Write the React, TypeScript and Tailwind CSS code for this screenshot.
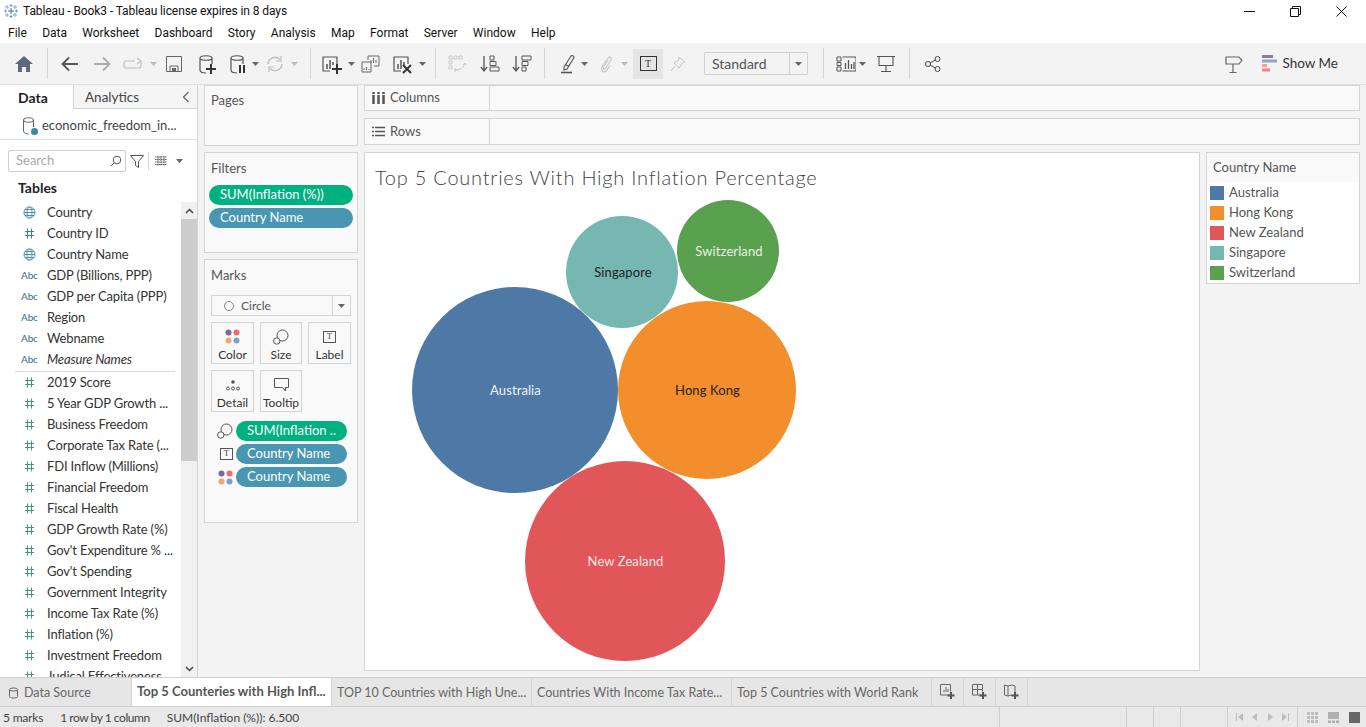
import React from "react";

const FONT = { fontFamily: "Lato, 'Open Sans', sans-serif" };
const UI_FONT = { fontFamily: "Roboto, 'Open Sans', sans-serif" };

const Ico = ({ w = 20, h = 20, children, className = "" }: { w?: number; h?: number; children: React.ReactNode; className?: string }) => (
  <svg width={w} height={h} viewBox={`0 0 ${w} ${h}`} fill="none" className={`shrink-0 ${className}`}>
    {children}
  </svg>
);

const Caret = ({ c = "#666" }: { c?: string }) => (
  <svg width="7" height="4" viewBox="0 0 7 4" className="shrink-0">
    <path d="M0 0h7L3.5 4z" fill={c} />
  </svg>
);

const Sep = () => <div className="w-px h-[31px] bg-[#d6d6d6] shrink-0" />;

// cylinder used by the data source icons
const Cyl = ({ c = "#555" }: { c?: string }) => (
  <path d="M2 4c0-3 12-3 12 0v6M2 4c0 3 12 3 12 0M2 4v12c0 2 3 3 6 3" stroke={c} strokeWidth="1.200" />
);

const BarsBox = ({ c = "#555" }: { c?: string }) => (
  <>
    <path d="M9 17H2V3h14v7" stroke={c} strokeWidth="1.200" />
    <path d="M6 10v5M9 6v9M12 8v3" stroke={c} strokeWidth="1.500" />
  </>
);

const Plus = ({ x, y, c = "#333" }: { x: number; y: number; c?: string }) => (
  <path d={`M${x} ${y - 5}v10M${x - 5} ${y}h10`} stroke={c} strokeWidth="2" />
);

const Toolbar = () => (
  <div className="h-[42px] bg-[#f3f3f3] flex items-center border-b border-[#dedede] shrink-0">
    <div className="w-[47px] flex justify-center">
      <Ico w={18} h={16}><path d="M9 0 0 8h3v8h4v-5h4v5h4V8h3z" fill="#5b6b7c" /></Ico>
    </div>
    <Sep />
    <div className="ml-[13px] flex items-center">
      <Ico w={18} h={16}><path d="M17 8H2M8 1.500 1.500 8 8 14.500" stroke="#555" strokeWidth="1.800" /></Ico>
      <Ico w={18} h={16} className="ml-[14px]"><path d="M1 8h15M10 1.500 16.500 8 10 14.500" stroke="#aaa" strokeWidth="1.800" /></Ico>
      <Ico w={20} h={14} className="ml-[12px]"><path d="M12 4H3C2 4 1 5 1 6.500v2C1 10 2 11 3 11h13c1 0 2-1 2-2.500V4M14 1l4 3-4 3" stroke="#c0c0c0" strokeWidth="1.200" /></Ico>
      <div className="ml-[7px]"><Caret c="#bbb" /></div>
      <Ico w={16} h={16} className="ml-[9px]"><path d="M.5.500h15v15H.500zM4 15v-5h8v5" stroke="#666" /><path d="M6 12h4v3H6z" fill="#666" /></Ico>
      <Ico w={20} h={20} className="ml-[16px]"><Cyl /><Plus x={13} y={15} /></Ico>
      <Ico w={20} h={20} className="ml-[11px]"><Cyl /><path d="M11 11v8M15 11v8" stroke="#333" strokeWidth="2" /></Ico>
      <div className="ml-[3px]"><Caret /></div>
      <Ico w={18} h={18} className="ml-[7px]"><path d="M2 9a7 7 0 0 1 12-4.500M16 9a7 7 0 0 1-12 4.500" stroke="#c0c0c0" strokeWidth="1.500" /><path d="M15 1v5h-5M3 17v-5h5" stroke="#c0c0c0" strokeWidth="1.200" /></Ico>
      <div className="ml-[7px]"><Caret c="#bbb" /></div>
    </div>
    <div className="ml-[12px]"><Sep /></div>
    <Ico w={22} h={20} className="ml-[10px]"><BarsBox /><Plus x={16} y={15} /></Ico>
    <div className="ml-[5px]"><Caret /></div>
    <Ico w={20} h={18} className="ml-[6px]">
      <path d="M7 5V1h11v10h-5M1 7h9v10H1z" stroke="#666" />
      <path d="M10 8V5M12.500 8V3M15 8V5M3 15v-2M5.500 15v-3M8 15v-1" stroke="#666" />
    </Ico>
    <Ico w={22} h={20} className="ml-[11px]"><BarsBox /><path d="M11 11l8 8M19 11l-8 8" stroke="#333" strokeWidth="2" /></Ico>
    <div className="ml-[5px]"><Caret /></div>
    <div className="ml-[9px]"><Sep /></div>
    <Ico w={20} h={20} className="ml-[12px]">
      <path d="M1 2h3v3H1zM6 2h3v3H6zM11 2h3v3h-3zM1 7h3v3H1zM1 12h3v3H1z" stroke="#c8c8c8" />
      <path d="M7 16c5 0 9-2 10-7M15 11l2-2 2 2M7 14v4M7 16h3" stroke="#c8c8c8" />
    </Ico>
    <Ico w={20} h={18} className="ml-[12px]">
      <path d="M4 1v14M1 12l3 4 3-4" stroke="#555" strokeWidth="1.300" />
      <path d="M10 1h4v4h-4zM10 6.500h6v4h-6zM10 12h9v4h-9z" stroke="#555" />
    </Ico>
    <Ico w={20} h={18} className="ml-[12px]">
      <path d="M4 1v14M1 12l3 4 3-4" stroke="#555" strokeWidth="1.300" />
      <path d="M10 1h9v4h-9zM10 6.500h6v4h-6zM10 12h4v4h-4z" stroke="#555" />
    </Ico>
    <div className="ml-[12px]"><Sep /></div>
    <Ico w={16} h={20} className="ml-[15px]">
      <path d="M4 13 11 2c1-1 3 0 3 1.500L7 15l-3 1zM5.500 10.500l3.500 2" stroke="#555" strokeWidth="1.100" />
      <path d="M1 18.500h11" stroke="#555" strokeWidth="1.600" />
    </Ico>
    <div className="ml-[5px]"><Caret /></div>
    <Ico w={12} h={18} className="ml-[12px]">
      <path d="M3 10 8 3c1.500-2 4 0 3 2L5.500 13.500c-1 1.500-3 .5-2.200-1L8 5.500M3 10c-3 4-1 7 1.500 7 1 0 2-1 2.500-2l3-4.500" stroke="#c4c4c4" strokeWidth="1.100" />
    </Ico>
    <div className="ml-[9px]"><Caret c="#bbb" /></div>
    <div className="ml-[5px] w-[30px] h-[30px] bg-[#e4e4e4] flex items-center justify-center">
      <div className="w-[17px] h-[15px] border border-[#333] flex items-center justify-center text-[10px] leading-none text-[#333]" style={{ fontFamily: "'Liberation Serif', serif" }}>T</div>
    </div>
    <Ico w={16} h={16} className="ml-[7px]"><path d="M9 1l6 5-3 1-2 4-1 1-5-5 1-1 4-2zM5 10l-4 5" stroke="#c4c4c4" /></Ico>
    <div className="ml-[18px] w-[104px] h-[23px] border border-[#cfcfcf] rounded-[2px] flex items-center text-[14px] text-[#555]">
      <span className="flex-1 pl-[7px]">Standard</span>
      <div className="w-[18px] h-full border-l border-[#cfcfcf] flex items-center justify-center"><Caret /></div>
    </div>
    <div className="ml-[15px]"><Sep /></div>
    <Ico w={20} h={16} className="ml-[12px]">
      <path d="M1 1h4v4H1zM1 6.500h4v3H1zM1 11h4v4H1zM6.500 1H20v14H6.500" stroke="#555" />
      <path d="M9.500 13V7M12.500 13V4M15.500 13V8M18 13V6" stroke="#555" strokeWidth="1.300" />
    </Ico>
    <div className="ml-[3px]"><Caret /></div>
    <Ico w={18} h={16} className="ml-[11px]"><path d="M0 .500h18M2 .500h14v9H2zM9 9.500v6M4 15.500h10" stroke="#555" strokeWidth="1.100" /></Ico>
    <div className="ml-[14px]"><Sep /></div>
    <Ico w={16} h={16} className="ml-[15px]">
      <circle cx="12.500" cy="3" r="2.500" stroke="#444" /><circle cx="3" cy="8" r="2.500" stroke="#444" /><circle cx="12.500" cy="13" r="2.500" stroke="#444" />
      <path d="M5 7l5.500-3M5 9l5.500 3" stroke="#444" />
    </Ico>
    <div className="flex-1" />
    <Ico w={18} h={18} className="mr-[19px]">
      <path d="M1 2h13l3 3-3 4H1zM8 9v9M4.500 17.500h7" stroke="#666" strokeWidth="1.200" />
    </Ico>
    <svg width="15" height="17" viewBox="0 0 15 17" className="shrink-0">
      <rect width="11" height="3" fill="#8b7ca0" />
      <rect y="4.500" width="15" height="3" fill="#8ba7cc" />
      <rect y="9" width="5" height="3" fill="#f4a77a" />
      <rect y="13.500" width="8" height="3" fill="#f27f85" />
    </svg>
    <span className="ml-[5px] mr-[28px] text-[13.5px] text-[#333]">Show Me</span>
  </div>
);

type Kind = "globe" | "hash" | "abc";

const FieldIcon = ({ kind, green }: { kind: Kind; green?: boolean }) => {
  if (kind === "abc")
    return <span className="text-[10px] -ml-[2px] text-[#3f7390] font-medium">Abc</span>;
  if (kind === "globe")
    return (
      <Ico w={13} h={13}>
        <circle cx="6.500" cy="6.500" r="5.500" stroke="#4f90ae" />
        <ellipse cx="6.500" cy="6.500" rx="2.500" ry="5.500" stroke="#4f90ae" />
        <path d="M1 6.500h11M2 3.500h9M2 9.500h9" stroke="#4f90ae" />
      </Ico>
    );
  const c = green ? "#3f9c7a" : "#3e7f9c";
  return (
    <Ico w={13} h={13}><path d="M4.500 1.500v10M8.500 1.500v10M2 4.500h9M2 8.500h9" stroke={c} /></Ico>
  );
};

const dims: [Kind, string, boolean?][] = [
  ["globe", "Country"],
  ["hash", "Country ID"],
  ["globe", "Country Name"],
  ["abc", "GDP (Billions, PPP)"],
  ["abc", "GDP per Capita (PPP)"],
  ["abc", "Region"],
  ["abc", "Webname"],
  ["abc", "Measure Names", true],
];

const measures = [
  "2019 Score",
  "5 Year GDP Growth ...",
  "Business Freedom",
  "Corporate Tax Rate (...",
  "FDI Inflow (Millions)",
  "Financial Freedom",
  "Fiscal Health",
  "GDP Growth Rate (%)",
  "Gov't Expenditure % ...",
  "Gov't Spending",
  "Government Integrity",
  "Income Tax Rate (%)",
  "Inflation (%)",
  "Investment Freedom",
  "Judical Effectiveness",
];

const Field = ({ icon, label, green, italic }: { icon: Kind; label: string; green?: boolean; italic?: boolean }) => (
  <div className={`h-[21px] flex items-center pl-[23px] text-[13px] tracking-[-0.15px] text-[#333] whitespace-nowrap ${italic ? "italic" : ""}`}>
    <span className="w-[24px] flex not-italic"><FieldIcon kind={icon} green={green} /></span>
    <span>{label}</span>
  </div>
);

const DataPane = () => (
  <aside className="w-[198px] shrink-0 bg-white border-r border-[#d4d4d4] flex flex-col overflow-hidden">
    <div className="h-[24px] flex shrink-0 text-[14px]">
      <div className="w-[73px] pl-[18px] font-bold text-[#222] flex items-center">Data</div>
      <div className="flex-1 flex items-center pl-[11px] pt-[1px] bg-[#f5f5f5] border-l border-b border-[#d4d4d4] text-[#444] text-[13.5px]">
        Analytics
        <svg width="8" height="12" viewBox="0 0 8 12" className="ml-auto mr-[7px]"><path d="M6.500 1 1.500 6l5 5" stroke="#666" strokeWidth="1.300" fill="none" /></svg>
      </div>
    </div>
    <div className="h-[31px] shrink-0 border-b border-[#e0e0e0] flex items-center pt-[3px] pl-[23px] text-[13px] text-[#444]">
      <span className="relative w-[14px] h-[18px]">
        <Ico w={12} h={18}><path d="M.5 3c0-3 10-3 10 0v7M.5 3c0 3 10 3 10 0M.5 3v11c0 2 3 3 5 3" stroke="#666" /></Ico>
        <span className="absolute right-[-1px] bottom-0 w-[7px] h-[7px] rounded-full bg-[#3e88a8]" />
      </span>
      <span className="ml-[5px]">economic_freedom_in...</span>
    </div>
    <div className="flex items-center h-[22px] mt-[10px] ml-[8px] shrink-0">
      <div className="w-[118px] h-[22px] border border-[#cfcfcf] rounded-[2px] flex items-center pl-[7px] text-[13px] text-[#aaa]">
        Search
        <svg width="12" height="12" viewBox="0 0 12 12" className="ml-auto mr-[3px]"><circle cx="7" cy="5" r="3.800" stroke="#555" fill="none" /><path d="M4.200 7.800 1 11" stroke="#555" /></svg>
      </div>
      <svg width="14" height="13" viewBox="0 0 14 13" className="ml-[4px]"><path d="M.5.500h13L8.500 6.500v6l-3-2v-4z" stroke="#555" fill="none" /></svg>
      <div className="w-px h-[18px] bg-[#d6d6d6] ml-[4px]" />
      <svg width="12" height="10" viewBox="0 0 12 10" className="ml-[6px]"><path d="M0 1h12M0 3.500h12M0 6h12M0 8.500h12M3 0v10M6 0v10M9 0v10" stroke="#666" strokeDasharray="1.500 .5" /></svg>
      <div className="ml-[9px]"><Caret /></div>
    </div>
    <div className="h-[30px] shrink-0 flex items-center pl-[18px] text-[14px] font-bold text-[#222]">Tables</div>
    <div className="flex-1 flex min-h-0">
      <div className="flex-1 overflow-hidden">
        {dims.map(([k, l, it]) => (
          <Field key={l} icon={k} label={l} italic={it} />
        ))}
        <div className="h-px bg-[#dcdcdc] ml-[15px] mt-[1px] w-[160px]" />
        {measures.map((l) => (
          <Field key={l} icon="hash" label={l} green />
        ))}
      </div>
      <div className="w-[16px] shrink-0 bg-[#f0f0f0] flex flex-col">
        <div className="h-[17px] flex items-center justify-center">
          <svg width="9" height="6" viewBox="0 0 9 6"><path d="M1 5 4.500 1.500 8 5" stroke="#444" strokeWidth="1.500" fill="none" /></svg>
        </div>
        <div className="h-[242px] bg-[#cdcdcd]" />
        <div className="mt-auto h-[17px] flex items-center justify-center">
          <svg width="9" height="6" viewBox="0 0 9 6"><path d="M1 1 4.500 4.500 8 1" stroke="#444" strokeWidth="1.500" fill="none" /></svg>
        </div>
      </div>
    </div>
  </aside>
);

const Pill = ({ label, green, className = "" }: { label: string; green?: boolean; className?: string }) => (
  <div className={`h-[20px] rounded-full flex items-center text-[13px] text-white whitespace-nowrap pl-[11px] ${green ? "bg-[#00b180]" : "bg-[#4996b2]"} ${className}`}>
    {label}
  </div>
);

const Card = ({ title, h, pt = "pt-[7px]", children }: { title: string; h: string; pt?: string; children?: React.ReactNode }) => (
  <div className={`${h} border border-[#d4d4d4] bg-[#f9f9f9] shrink-0`}>
    <div className={`px-[6px] ${pt} text-[13px] leading-[16px] text-[#555]`}>{title}</div>
    {children}
  </div>
);

const Dots = () => (
  <svg width="15" height="15" viewBox="0 0 15 15">
    <circle cx="3.500" cy="3.500" r="3" fill="#7b6a96" />
    <circle cx="11.500" cy="3.500" r="3" fill="#ee6a75" />
    <circle cx="3.500" cy="11.500" r="3" fill="#f2a56e" />
    <circle cx="11.500" cy="11.500" r="3" fill="#7f9fc9" />
  </svg>
);

const SizeIco = () => (
  <svg width="16" height="16" viewBox="0 0 16 16" fill="none">
    <circle cx="9.500" cy="6.500" r="5.500" stroke="#555" />
    <circle cx="3.800" cy="12" r="3.200" stroke="#555" fill="#f9f9f9" />
  </svg>
);

const TBox = () => (
  <div className="w-[13px] h-[12px] border border-[#555] flex items-center justify-center text-[8px] leading-none text-[#333]" style={{ fontFamily: "'Liberation Serif', serif" }}>T</div>
);

const MarkBtn = ({ label, children }: { label: string; children: React.ReactNode }) => (
  <div className="h-[42px] border border-[#d4d4d4] flex flex-col items-center text-[12px] text-[#333]">
    <div className="h-[24px] flex items-center justify-center pt-[3px]">{children}</div>
    <div className="leading-[16px]">{label}</div>
  </div>
);

const Cards = () => (
  <div className="w-[154px] shrink-0 ml-[6px] flex flex-col gap-[6px]">
    <Card title="Pages" h="h-[61px]" pt="pt-[6px]" />
    <Card title="Filters" h="h-[101px]">
      <div className="mt-[9px] ml-[4px] w-[144px] flex flex-col gap-[3px]">
        <Pill green label="SUM(Inflation (%))" />
        <Pill label="Country Name" />
      </div>
    </Card>
    <Card title="Marks" h="h-[264px]">
      <div className="mx-[6px] mt-[12px] h-[21px] w-[140px] border border-[#d4d4d4] flex items-center text-[12px] text-[#555]">
        <div className="flex-1 flex items-center pl-[12px]">
          <span className="w-[10px] h-[10px] rounded-full border border-[#888]" />
          <span className="ml-[7px]">Circle</span>
        </div>
        <div className="w-[18px] h-full border-l border-[#d4d4d4] flex items-center justify-center"><Caret /></div>
      </div>
      <div className="ml-[6px] mt-[6px] grid grid-cols-[43px_42px_43px] gap-[6px]">
        <MarkBtn label="Color"><Dots /></MarkBtn>
        <MarkBtn label="Size"><SizeIco /></MarkBtn>
        <MarkBtn label="Label"><TBox /></MarkBtn>
        <MarkBtn label="Detail">
          <svg width="14" height="12" viewBox="0 0 14 12" fill="none">
            <circle cx="7" cy="3" r="1.800" fill="#555" />
            <circle cx="2" cy="9.500" r="1.500" stroke="#555" /><circle cx="7" cy="9.500" r="1.500" stroke="#555" /><circle cx="12" cy="9.500" r="1.500" stroke="#555" />
          </svg>
        </MarkBtn>
        <MarkBtn label="Tooltip">
          <svg width="15" height="14" viewBox="0 0 15 14" fill="none"><path d="M.5.500h14v9h-3v3.500l-3-3.500H.5z" stroke="#555" /></svg>
        </MarkBtn>
      </div>
      <div className="mt-[9px] flex flex-col gap-[3px]">
        {[
          { ic: <SizeIco />, label: "SUM(Inflation ..", green: true },
          { ic: <TBox />, label: "Country Name", green: false },
          { ic: <Dots />, label: "Country Name", green: false },
        ].map((p, i) => (
          <div key={i} className="flex items-center h-[20px]">
            <div className="w-[31px] pr-[3px] flex justify-end">{p.ic}</div>
            <Pill label={p.label} green={p.green} className="w-[111px]" />
          </div>
        ))}
      </div>
    </Card>
  </div>
);

const Shelf = ({ label, icon, h }: { label: string; icon: React.ReactNode; h: string }) => (
  <div className={`${h} border border-[#d4d4d4] bg-[#f9f9f9] flex shrink-0`}>
    <div className="w-[125px] border-r border-[#d4d4d4] flex items-center pl-[7px] text-[13px] text-[#555]">
      <span className="w-[18px]">{icon}</span>
      {label}
    </div>
  </div>
);

const bubbles = [
  { name: "Australia", cx: 150.5, cy: 238, r: 103, bg: "bg-[#4e79a7]", text: "text-[#eef2f6]" },
  { name: "Hong Kong", cx: 342.5, cy: 238, r: 89, bg: "bg-[#f28e2b]", text: "text-[#222]" },
  { name: "New Zealand", cx: 260.5, cy: 409, r: 100, bg: "bg-[#e15759]", text: "text-[#f8e6e6]" },
  { name: "Singapore", cx: 258, cy: 120, r: 56, bg: "bg-[#76b7b2]", text: "text-[#222]" },
  { name: "Switzerland", cx: 364, cy: 99, r: 51, bg: "bg-[#59a14f]", text: "text-[#e8f2e6]" },
];

const View = () => (
  <div className="relative flex-1 h-[519px] border border-[#d4d4d4] bg-white">
    <div className="pl-[10px] pt-[11px] text-[20px] font-light leading-[26px] text-[#444] tracking-[0.76px]">
      Top 5 Countries With High Inflation Percentage
    </div>
    {bubbles.map((b) => (
      <div
        key={b.name}
        className={`absolute rounded-full flex items-center justify-center pt-[2px] pl-[2px] text-[13px] tracking-[0.1px] ${b.bg} ${b.text}`}
        style={{ left: b.cx - b.r - 1, top: b.cy - b.r - 1, width: b.r * 2, height: b.r * 2 }}
      >
        {b.name}
      </div>
    ))}
  </div>
);

const legend: [string, string][] = [
  ["bg-[#4e79a7]", "Australia"],
  ["bg-[#f28e2b]", "Hong Kong"],
  ["bg-[#e15759]", "New Zealand"],
  ["bg-[#76b7b2]", "Singapore"],
  ["bg-[#59a14f]", "Switzerland"],
];

const Legend = () => (
  <div className="w-[154px] h-[132px] ml-[6px] shrink-0 border border-[#d4d4d4] bg-white text-[13px] text-[#555]">
    <div className="h-[29px] bg-[#f9f9f9] flex items-center pl-[6px]">Country Name</div>
    <div className="pt-[1px]">
      {legend.map(([c, l]) => (
        <div key={l} className="h-[20px] flex items-center pl-[3px]">
          <span className={`w-[14px] h-[14px] ${c}`} />
          <span className="ml-[5px]">{l}</span>
        </div>
      ))}
    </div>
  </div>
);

const tabs = [
  "TOP 10 Countries with High Une...",
  "Countries With Income Tax Rate...",
  "Top 5 Countries with World Rank",
];

const TabBar = () => (
  <div className="h-[30px] shrink-0 bg-[#e6e6e6] border-t border-b border-[#cfcfcf] flex text-[12.5px] text-[#666]">
    <div className="w-[132px] flex items-center pl-[9px] pt-[2px] border-r border-[#d4d4d4]">
      <svg width="9" height="12" viewBox="0 0 9 12" fill="none"><path d="M.5 2.500c0-2 8-2 8 0v7c0 2-8 2-8 0zM.5 2.500c0 2 8 2 8 0" stroke="#666" /></svg>
      <span className="ml-[6px]">Data Source</span>
    </div>
    <div className="w-[200px] bg-white flex items-center pl-[5px] border-r border-[#d4d4d4] text-[13px] font-bold text-[#555] whitespace-nowrap">
      Top 5 Counteries with High Infl...
    </div>
    {tabs.map((t) => (
      <div key={t} className="w-[200px] flex items-center pl-[5px] pt-[2px] border-r border-[#d4d4d4] whitespace-nowrap">{t}</div>
    ))}
    {[0, 1, 2].map((i) => (
      <div key={i} className="w-[32px] flex items-center justify-center border-r border-[#d4d4d4]">
        <svg width="16" height="16" viewBox="0 0 16 16" fill="none">
          {i === 0 && <path d="M9 11H.5V.5h10v7M4 8V6M6 8V3M8 8V5" stroke="#666" />}
          {i === 1 && <path d="M9 11H.5V.5h10v7M.5 5.500h10M5.500.5V11" stroke="#666" />}
          {i === 2 && <path d="M8 11 4 12 .5 11V1L4 2l4-1 3 1v6M4 2v10" stroke="#666" />}
          <path d="M11 8v7M7.500 11.500h7" stroke="#555" strokeWidth="2" />
        </svg>
      </div>
    ))}
  </div>
);

const StatusBar = () => (
  <div className="h-[20px] shrink-0 bg-[#e9e9e9] flex items-center text-[12px] text-[#444]">
    <span className="ml-[3px] pt-[1px] tracking-[-0.2px]">5 marks</span>
    <span className="ml-[17px] pt-[1px] tracking-[-0.45px]">1 row by 1 column</span>
    <span className="ml-[17px] pt-[1px]">SUM(Inflation (%)): 6.500</span>
    <div className="flex-1" />
    <div className="w-[127px] h-full border-l border-[#cfcfcf]" />
    <div className="w-[27px] h-full border-l border-[#cfcfcf]" />
    <div className="w-[27px] h-full border-l border-[#cfcfcf]" />
    <div className="w-[47px] h-full border-l border-[#cfcfcf]" />
    <div className="w-[71px] h-full border-l border-r border-[#cfcfcf] flex items-center justify-center gap-[9px]">
      <svg width="7" height="8" viewBox="0 0 7 8"><path d="M7 0v8L2 4zM0 0h1v8H0z" fill="#bdbdbd" /></svg>
      <svg width="6" height="8" viewBox="0 0 6 8"><path d="M5 0v8L0 4z" fill="#bdbdbd" /></svg>
      <svg width="6" height="8" viewBox="0 0 6 8"><path d="M1 0v8l5-4z" fill="#bdbdbd" /></svg>
      <svg width="7" height="8" viewBox="0 0 7 8"><path d="M0 0v8l5-4zM6 0h1v8H6z" fill="#bdbdbd" /></svg>
    </div>
    <div className="flex items-center ml-[9px] mr-[6px] gap-[10px]">
      <svg width="11" height="11" viewBox="0 0 11 11" fill="#bdbdbd">
        {[0, 4, 8].flatMap((x) => [0, 4, 8].map((y) => <rect key={`${x}-${y}`} x={x} y={y} width="3" height="3" />))}
      </svg>
      <svg width="11" height="11" viewBox="0 0 11 11" fill="#b0b0b0"><path d="M0 0h11v7H0zM0 8.500h3V11H0zM4 8.500h3V11H4zM8 8.500h3V11H8z" /></svg>
      <span className="w-[11px] h-[11px] bg-[#666]" />
    </div>
  </div>
);

// small plus marks that make up the app logo
const logoCrosses: [number, number, number, string][] = [
  [8, 8, 3, "#3f6f95"],
  [8, 2.5, 1.5, "#6f9fc0"],
  [8, 13.5, 1.5, "#6f9fc0"],
  [2.5, 8, 1.5, "#6f9fc0"],
  [13.5, 8, 1.5, "#6f9fc0"],
  [4, 4, 2, "#7fb0cc"],
  [12, 4, 2, "#7fb0cc"],
  [4, 12, 2, "#7fb0cc"],
  [12, 12, 2, "#7fb0cc"],
];

const App = () => {
  return (
    <div className="w-[1366px] h-[727px] flex flex-col overflow-hidden bg-[#f3f3f3]" style={FONT}>
      <div className="h-[22px] bg-white flex items-center shrink-0 text-[12px] text-[#111]" style={UI_FONT}>
        <svg width="16" height="16" viewBox="0 0 16 16" className="ml-[3px]" fill="none">
          {logoCrosses.map(([x, y, s, c], i) => (
            <path key={i} d={`M${x} ${y - s}v${s * 2}M${x - s} ${y}h${s * 2}`} stroke={c} strokeWidth="1" />
          ))}
        </svg>
        <span className="ml-[4px] tracking-[-0.1px]">Tableau - Book3 - Tableau license expires in 8 days</span>
        <div className="flex-1" />
        <svg width="11" height="1" className="mr-[35px]"><rect width="11" height="1" fill="#111" /></svg>
        <svg width="11" height="11" viewBox="0 0 11 11" className="mr-[35px]" fill="none"><path d="M.5 2.500h8v8h-8zM2.500 2.500v-2h8v8h-2" stroke="#111" /></svg>
        <svg width="11" height="11" viewBox="0 0 11 11" className="mr-[19px]" fill="none"><path d="M.5.5l10 10M10.500.5l-10 10" stroke="#111" /></svg>
      </div>
      <div className="h-[21px] bg-white flex items-center shrink-0 pl-[8px] pt-[1px] gap-[15.3px] text-[12px] text-[#111]" style={UI_FONT}>
        {["File", "Data", "Worksheet", "Dashboard", "Story", "Analysis", "Map", "Format", "Server", "Window", "Help"].map((m) => (
          <span key={m}>{m}</span>
        ))}
      </div>
      <Toolbar />
      <div className="flex-1 flex min-h-0">
        <DataPane />
        <div className="flex-1 flex pb-[6px] min-w-0">
          <Cards />
          <div className="flex-1 ml-[6px] mr-[6px] flex flex-col gap-[7px] min-w-0">
            <Shelf h="h-[26px]" label="Columns" icon={<svg width="13" height="12" viewBox="0 0 13 12"><path d="M1.500 3v9M6.500 3v9M11.500 3v9M1.500 0v2M6.500 0v2M11.500 0v2" stroke="#555" strokeWidth="2.500" /></svg>} />
            <Shelf h="h-[27px]" label="Rows" icon={<svg width="13" height="11" viewBox="0 0 13 11"><path d="M3 1.500h10M3 5.500h10M3 9.500h10M0 1.500h2M0 5.500h2M0 9.500h2" stroke="#555" strokeWidth="1.700" /></svg>} />
            <div className="flex">
              <View />
              <Legend />
            </div>
          </div>
        </div>
      </div>
      <TabBar />
      <StatusBar />
    </div>
  );
};

export default App;
